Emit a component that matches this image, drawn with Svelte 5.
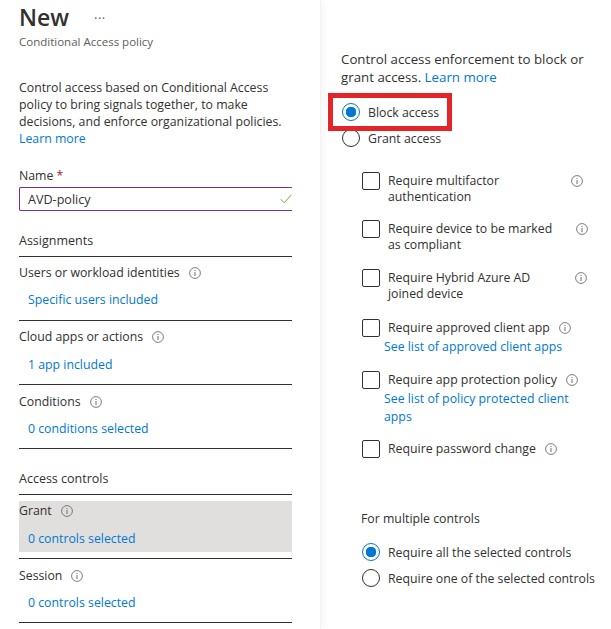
<script>
    const assignments = [
        {label: 'Users or workload identities', link: 'Specific users included'},
        {label: 'Cloud apps or actions', link: '1 app included'},
        {label: 'Conditions', link: '0 conditions selected', low: true},
    ]
    const controls = [
        {label: 'Grant', link: '0 controls selected', active: true},
        {label: 'Session', link: '0 controls selected', low: true},
    ]
    // width keeps the info icon of the two line rows out at the right
    const requirements = [
        {lines: ['Require multifactor', 'authentication'], width: 195, height: 48},
        {lines: ['Require device to be marked', 'as compliant'], width: 200, height: 49},
        {lines: ['Require Hybrid Azure AD', 'joined device'], width: 199, height: 50},
        {lines: ['Require approved client app'], links: ['See list of approved client apps'], height: 52},
        {lines: ['Require app protection policy'], links: ['See list of policy protected client', 'apps'], height: 69},
        {lines: ['Require password change'], height: 0},
    ]
</script>

{#snippet info()}
    <svg class="info" viewBox="0 0 12 12" width="12" height="12" aria-hidden="true">
        <circle cx="6" cy="6" r="5.4" fill="none" stroke="#6f6e6d" stroke-width="0.9" />
        <rect x="5.5" y="5" width="1" height="4" fill="#6f6e6d" />
        <rect x="5.5" y="3" width="1" height="1" fill="#6f6e6d" />
    </svg>
{/snippet}

<div class="page">
    <aside class="left">
        <header class="title">
            <h1>New</h1>
            <span class="more">···</span>
        </header>
        <p class="subtitle">Conditional Access policy</p>

        <p class="intro">
            Control access based on Conditional Access<br />
            policy to bring signals together, to make<br />
            decisions, and enforce organizational policies.<br />
            <a href="#learn">Learn more</a>
        </p>

        <div class="field-label">Name <span class="req">*</span></div>
        <div class="input">
            <span>AVD-policy</span>
            <svg viewBox="0 0 12 10" width="12" height="10" aria-hidden="true">
                <path d="M0.8 5.2 L4.2 8.8 L11.4 0.8" fill="none" stroke="#6bb13c" stroke-width="1" />
            </svg>
        </div>

        <h2 class="section first">Assignments</h2>
        {#each assignments as item}
            <div class="item" class:low={item.low}>
                <div class="item-label">{item.label}{@render info()}</div>
                <a class="item-link" href="#item">{item.link}</a>
            </div>
        {/each}

        <h2 class="section">Access controls</h2>
        {#each controls as item}
            <div class="item" class:active={item.active} class:low={item.low}>
                <div class="item-inner">
                    <div class="item-label">{item.label}{@render info()}</div>
                    <a class="item-link" href="#item">{item.link}</a>
                </div>
            </div>
        {/each}
    </aside>

    <main class="right">
        <p class="lead">
            Control access enforcement to block or<br />
            grant access. <a href="#learn">Learn more</a>
        </p>

        <div class="radio-row block">
            <span class="radio on"></span>
            <span>Block access</span>
            <span class="highlight"></span>
        </div>
        <div class="radio-row">
            <span class="radio"></span>
            <span>Grant access</span>
        </div>

        <div class="requirements">
            {#each requirements as req}
                <div class="req-row" style="height: {req.height}px">
                    <span class="check"></span>
                    <div class="req-text">
                        <div class="req-head" class:wide={req.width} style={req.width ? `width: ${req.width}px` : ''}>
                            <div>
                                {#each req.lines as line}
                                    <div>{line}</div>
                                {/each}
                            </div>
                            <span class="req-info">{@render info()}</span>
                        </div>
                        {#if req.links}
                            <div class="req-links">
                                {#each req.links as link}
                                    <a href="#list">{link}</a>
                                {/each}
                            </div>
                        {/if}
                    </div>
                </div>
            {/each}
        </div>

        <div class="multi">
            <p>For multiple controls</p>
            <div class="radio-row">
                <span class="radio on"></span>
                <span>Require all the selected controls</span>
            </div>
            <div class="radio-row">
                <span class="radio"></span>
                <span>Require one of the selected controls</span>
            </div>
        </div>
    </main>
</div>

<style>
    :global(body) {
        margin: 0;
        background: #fff;
    }

    .page {
        display: flex;
        width: 611px;
        height: 629px;
        overflow: hidden;
        font-family: 'Open Sans', 'Noto Sans', sans-serif;
        font-size: 12.3px;
        color: #323130;
    }

    a {
        color: #0078d4;
        text-decoration: none;
    }

    .left {
        box-sizing: border-box;
        width: 321px;
        flex: none;
        padding: 0 28px 0 19px;
        border-right: 1px solid #f2f2f2;
        box-shadow: 4px 0 6px rgba(0, 0, 0, 0.03);
    }

    .title {
        display: flex;
        align-items: center;
        height: 35px;
    }

    h1 {
        margin: 0;
        font-size: 23px;
        font-weight: 600;
        line-height: 35px;
    }

    .more {
        margin-left: 25px;
        font-size: 13px;
        letter-spacing: 0.5px;
        color: #605e5c;
    }

    .subtitle {
        margin: 0;
        height: 14px;
        line-height: 14px;
        font-size: 11.5px;
        color: #605e5c;
    }

    .intro {
        margin: 30px 0 0;
        line-height: 17px;
    }

    .field-label {
        margin-top: 20px;
        line-height: 17px;
    }

    .req {
        color: #a4262c;
    }

    .input {
        box-sizing: border-box;
        display: flex;
        align-items: center;
        justify-content: space-between;
        height: 24px;
        margin-top: 3px;
        padding: 0 0 0 8px;
        font-size: 12.6px;
        border: 1px solid #7b2d9c;
        border-right: none;
        border-radius: 2px 0 0 2px;
    }

    .section {
        margin: 0;
        height: 46px;
        padding-top: 21px;
        box-sizing: border-box;
        font-size: 12.5px;
        font-weight: 400;
        line-height: 17px;
        border-bottom: 1px solid #323130;
    }

    .item {
        box-sizing: border-box;
        height: 64px;
        border-bottom: 1px solid #323130;
    }

    .item-label {
        display: flex;
        align-items: center;
        height: 17px;
        padding-top: 7px;
    }

    .info {
        margin-left: 9px;
        flex: none;
    }

    .item-link {
        display: block;
        margin: 11px 0 0 9px;
        line-height: 17px;
    }

    .section.first + .item .item-link {
        margin-top: 10px;
    }

    .item.low .item-label {
        padding-top: 8px;
    }

    .item.low .item-link {
        margin-top: 10px;
    }

    .item.active {
        padding-top: 6px;
    }

    .item.active .item-inner {
        height: 51px;
        background: #e1dfdd;
    }

    .item.active .item-label {
        padding-top: 1px;
    }

    .right {
        flex: 1;
        padding: 50px 0 0 20px;
        min-width: 0;
    }

    .lead {
        margin: 0;
        line-height: 18px;
        font-size: 13.3px;
    }

    .radio-row {
        display: flex;
        align-items: center;
        gap: 8px;
        height: 26px;
        padding-left: 1px;
        white-space: nowrap;
    }

    .radio-row.block {
        position: relative;
        margin-top: 13px;
    }

    .radio {
        box-sizing: border-box;
        width: 18px;
        height: 18px;
        flex: none;
        border: 1px solid #323130;
        border-radius: 50%;
        background: #fff;
    }

    .radio.on {
        border-color: #0078d4;
        background: radial-gradient(circle, #0078d4 0 5px, #fff 5.5px);
    }

    .highlight {
        position: absolute;
        left: -13px;
        top: -6px;
        width: 124px;
        height: 38px;
        box-sizing: border-box;
        border: 5px solid #e42528;
    }

    .requirements {
        margin: 22px 0 0 21px;
    }

    .req-row {
        display: flex;
        gap: 8px;
    }

    .check {
        box-sizing: border-box;
        width: 18px;
        height: 18px;
        flex: none;
        margin-top: -1px;
        border: 1px solid #323130;
        border-radius: 2px;
    }

    .req-text {
        min-width: 0;
        white-space: nowrap;
    }

    .req-head {
        display: flex;
        line-height: 16px;
    }

    .req-head.wide {
        justify-content: space-between;
    }

    .req-info {
        display: block;
        line-height: 0;
        padding-top: 2px;
    }

    .req-head.wide .req-info :global(.info) {
        margin-left: 0;
    }

    .req-links {
        margin: 2px 0 0 -4px;
        line-height: 18px;
    }

    .req-links a {
        display: block;
    }

    .multi {
        margin: 69px 0 0 20px;
    }

    .multi p {
        margin: 0 0 12px;
        line-height: 17px;
    }
</style>
